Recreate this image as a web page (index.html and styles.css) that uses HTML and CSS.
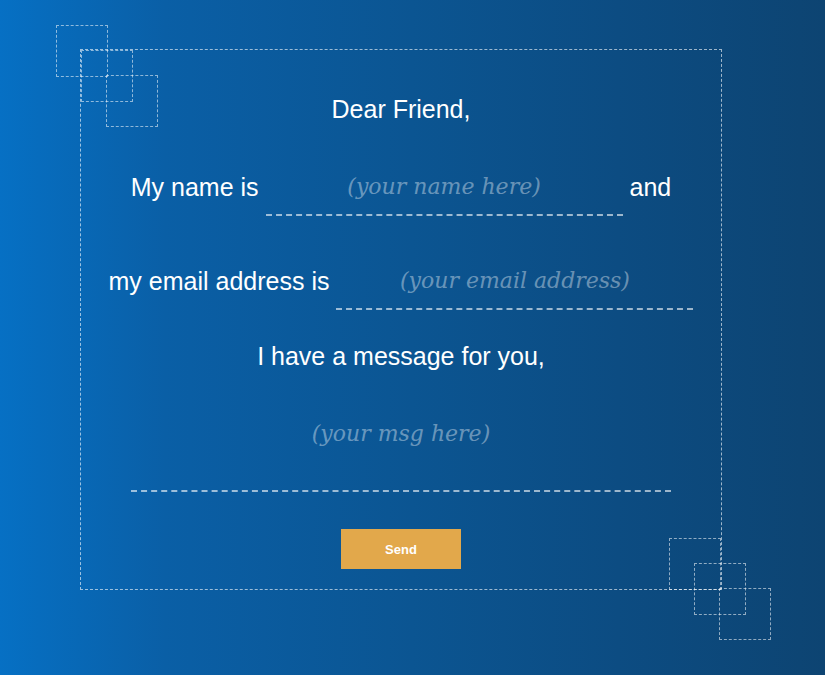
FILE: index.html
```html
<!DOCTYPE html>
<html lang="en">
<head>
<meta charset="utf-8">
<title>Dear Friend</title>
<link rel="stylesheet" href="styles.css">
</head>
<body>
<div class="page">
  <form class="letter">
    <span class="sq sq-tl1"></span>
    <span class="sq sq-tl2"></span>
    <span class="sq sq-tl3"></span>
    <span class="sq sq-br1"></span>
    <span class="sq sq-br2"></span>
    <span class="sq sq-br3"></span>
    <p class="line greet">Dear Friend,</p>
    <div class="line row row-name">
      <span>My name is</span>
      <input class="field" type="text" placeholder="(your name here)">
      <span>and</span>
    </div>
    <div class="line row row-email">
      <span>my email address is</span>
      <input class="field" type="email" placeholder="(your email address)">
    </div>
    <p class="line msg-intro">I have a message for you,</p>
    <textarea class="msg" placeholder="(your msg here)"></textarea>
    <button class="send" type="button">Send</button>
  </form>
</div>
</body>
</html>
```

FILE: styles.css
```css
html, body {
  margin: 0;
  height: 100%;
}
body {
  background: linear-gradient(to right, #0670c4 0%, #0a5fa6 20%, #0b5592 50%, #0c4c82 75%, #0d4472 100%);
  font-family: "Liberation Sans", Arial, sans-serif;
  color: #fff;
  overflow: hidden;
}
.page {
  padding: 49px 0 0 80px;
}
.letter {
  position: relative;
  box-sizing: border-box;
  width: 642px;
  height: 541px;
  border: 1px dashed rgba(255, 255, 255, 0.6);
  display: flex;
  flex-direction: column;
  align-items: center;
  padding-top: 44px;
}
.line {
  font-size: 25px;
  line-height: 30px;
  margin: 0;
}
.row {
  display: flex;
  align-items: center;
  gap: 7px;
}
.row-name { margin-top: 34px; }
.row-email { margin-top: 36px; }
.msg-intro { margin-top: 31px; }
.field {
  width: 357px;
  height: 58px;
  box-sizing: border-box;
  padding: 0;
  background: transparent;
  border: none;
  border-bottom: 2px dashed rgba(255, 255, 255, 0.6);
  font-family: "DejaVu Serif", Georgia, serif;
  font-style: italic;
  font-size: 22px;
  color: #fff;
  text-align: center;
  outline: none;
}
.field::placeholder, .msg::placeholder {
  color: rgba(255, 255, 255, 0.4);
}
.msg {
  margin-top: 19px;
  width: 540px;
  height: 102px;
  box-sizing: border-box;
  padding: 29px 0 0;
  background: transparent;
  border: none;
  border-bottom: 2px dashed rgba(255, 255, 255, 0.6);
  font-family: "DejaVu Serif", Georgia, serif;
  font-style: italic;
  font-size: 22px;
  line-height: 30px;
  color: #fff;
  text-align: center;
  resize: none;
  outline: none;
}
.send {
  margin-top: 37px;
  width: 120px;
  height: 40px;
  border: none;
  background: #e2a84b;
  color: #fff;
  font-family: "Liberation Sans", Arial, sans-serif;
  font-weight: bold;
  font-size: 13px;
}
.sq {
  position: absolute;
  width: 52px;
  height: 52px;
  box-sizing: border-box;
  border: 1px dashed rgba(255, 255, 255, 0.55);
}
.sq-tl1 { left: -25px; top: -25px; }
.sq-tl2 { left: 0; top: 0; }
.sq-tl3 { left: 25px; top: 25px; }
.sq-br1 { right: 0; bottom: -1px; }
.sq-br2 { right: -25px; bottom: -26px; }
.sq-br3 { right: -50px; bottom: -51px; }
```
